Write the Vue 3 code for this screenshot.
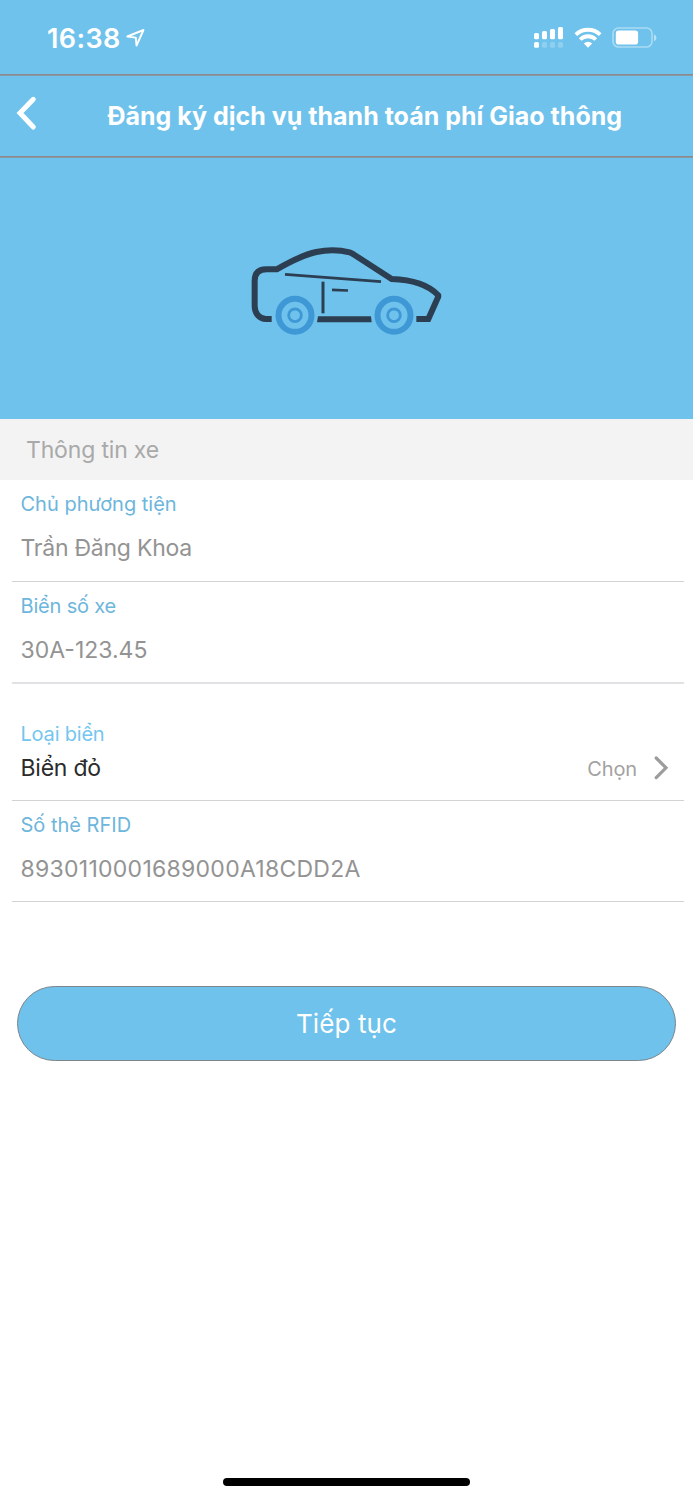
<script setup>
const owner = { label: 'Chủ phương tiện', value: 'Trần Đăng Khoa' }
const plate = { label: 'Biển số xe', value: '30A-123.45' }
const rfid = { label: 'Số thẻ RFID', value: '8930110001689000A18CDD2A' }
</script>

<template>
  <div class="screen">
    <div class="status">
      <span class="time">16:38</span>
      <svg class="loc" width="20" height="20" viewBox="0 0 20 20" fill="none" stroke="#fff" stroke-width="1.9" stroke-linejoin="round">
        <path d="M17.500 2 L1.300 8.500 L9.800 9.600 L10.500 17.500 Z" />
      </svg>
      <svg class="signal" width="30" height="22" viewBox="0 0 30 22" fill="#fff">
        <rect x="0" y="7" width="5" height="6.3" rx="1.5" />
        <rect x="8" y="5" width="5" height="8.3" rx="1.5" />
        <rect x="16" y="3" width="5" height="10.3" rx="1.5" />
        <rect x="24" y="1" width="5" height="12.3" rx="1.5" />
        <rect x="0" y="16" width="5" height="5.7" rx="1.5" />
        <g opacity=".22">
          <rect x="8" y="16" width="5" height="5.7" rx="1.5" />
          <rect x="16" y="16" width="5" height="5.7" rx="1.5" />
          <rect x="24" y="16" width="5" height="5.7" rx="1.5" />
        </g>
      </svg>
      <svg class="wifi" width="28" height="21" viewBox="0 0 28 21" fill="none" stroke="#fff" stroke-width="3.8">
        <path d="M1.8 7.7 A17.5 17.5 0 0 1 26.2 7.7" />
        <path d="M6.2 12.5 A11 11 0 0 1 21.8 12.5" />
        <path d="M9.800 16.500 A6 6 0 0 1 18.200 16.500 L14 20.800 Z" fill="#fff" stroke="none" />
      </svg>
      <svg class="battery" width="45" height="22" viewBox="0 0 45 22">
        <rect x="1" y="1" width="39" height="19" rx="5.5" fill="none" stroke="#fff" stroke-opacity=".42" stroke-width="1.6" />
        <rect x="3.8" y="3.6" width="22.3" height="14" rx="2.8" fill="#fff" />
        <path d="M42 7.3 Q44.5 8.5 44.5 10.7 Q44.5 13 42 14.2 Z" fill="#fff" fill-opacity=".5" />
      </svg>
    </div>

    <div class="navbar">
      <svg class="back" width="24" height="36" viewBox="0 0 24 36" fill="none" stroke="#fff" stroke-width="5" stroke-linecap="round" stroke-linejoin="miter">
        <path d="M19.300 4.300 L6 18 L19.300 32" />
      </svg>
      <h1 class="title">Đăng ký dịch vụ thanh toán phí Giao thông</h1>
    </div>

    <div class="hero">
      <svg width="220" height="120" viewBox="0 0 660 360" fill="none" stroke="#2c3e52">
        <path d="M110 267 H93 C73 267 59 250 59 228 V152 C59 129 72 118 95 118 H125 C167 94 205 74 244 66 C277 59 315 60 344 67 Q351 69 357 74 L470 147 C532 149 578 163 609 195 Q611 198 609 202 L580 267 H544" stroke-width="18" />
        <path d="M249 259 H408 L410 277 H246 Z" fill="#2c3e52" stroke="none" />
        <path d="M150 133 L438 155" stroke-width="8" />
        <path d="M264 155 V250" stroke-width="9" />
        <path d="M291 179.500 L339 181.500" stroke-width="8" />
        <g stroke="#3d98d5">
          <circle cx="180" cy="256" r="49.500" stroke-width="18" />
          <circle cx="180" cy="256" r="19" stroke-width="8.500" />
          <circle cx="477" cy="256" r="49.500" stroke-width="18" />
          <circle cx="477" cy="256" r="19" stroke-width="8.500" />
        </g>
      </svg>
    </div>

    <h2 class="section">Thông tin xe</h2>

    <div class="field">
      <span class="label">{{ owner.label }}</span>
      <span class="value owner">{{ owner.value }}</span>
    </div>
    <div class="field soft">
      <span class="label plate-label">{{ plate.label }}</span>
      <span class="value">{{ plate.value }}</span>
    </div>
    <div class="picker">
      <div class="choice">
        <span class="label type-label">Loại biển</span>
        <span class="value dark">Biển đỏ</span>
      </div>
      <span class="choose">Chọn</span>
      <svg class="chevron" width="18" height="26" viewBox="0 0 18 26" fill="none" stroke="#9c9c9c" stroke-width="3.200" stroke-linecap="round">
        <path d="M4.200 3 L14 12.800 L4.200 22.600" />
      </svg>
    </div>
    <div class="field last">
      <span class="label">{{ rfid.label }}</span>
      <span class="value rfid">{{ rfid.value }}</span>
    </div>

    <button class="next" type="button"><span>Tiếp tục</span></button>
    <div class="home"></div>
  </div>
</template>

<style>
body { background: #fff; }
</style>

<style scoped>
.screen {
  box-sizing: border-box;
  width: 693px;
  height: 1500px;
  display: flex;
  flex-direction: column;
  overflow: hidden;
  background: #fff;
  font-family: Inter, "Liberation Sans", sans-serif;
}
.status {
  box-sizing: border-box;
  height: 76px;
  flex: none;
  display: flex;
  align-items: flex-start;
  background: #6fc2eb;
  border-bottom: 1px solid #8599a8;
  box-shadow: inset 0 -1px #90898b;
  color: #fff;
}
.time {
  width: 79px;
  margin: 22px 0 0 47px;
  font-size: 27px;
  line-height: 33px;
  font-weight: 570;
  letter-spacing: 0.4px;
  white-space: nowrap;
}
.loc { margin-top: 28px; }
.signal { margin: 26px 0 0 388px; }
.wifi { margin: 27px 0 0 10px; }
.battery { margin: 27px 0 0 10px; }
.navbar {
  box-sizing: border-box;
  height: 82px;
  flex: none;
  display: flex;
  align-items: flex-start;
  background: #6fc2eb;
  border-bottom: 1px solid #8599a8;
  box-shadow: inset 0 -1px #90898b;
}
.back { margin: 19px 0 0 14px; }
.title {
  margin: 24px 0 0 69.4px;
  font-size: 25px;
  line-height: 32px;
  font-weight: 680;
  letter-spacing: 0.01px;
  color: #fff;
  white-space: nowrap;
}
.hero {
  box-sizing: border-box;
  height: 261px;
  flex: none;
  padding: 72px 0 0 235px;
  background: #6fc2eb;
}
.hero svg { display: block; }
.section {
  box-sizing: border-box;
  height: 61px;
  flex: none;
  margin: 0;
  padding: 15px 0 0 26px;
  background: #f3f3f3;
  font-size: 23px;
  line-height: 32px;
  font-weight: 400;
  letter-spacing: -0.17px;
  color: #a9a9a9;
}
.field {
  box-sizing: border-box;
  height: 102px;
  flex: none;
  display: flex;
  flex-direction: column;
  margin: 0 9px 0 12px;
  padding: 10px 0 0 8.5px;
  border-bottom: 1px solid #d3d3d6;
}
.soft { border-bottom: 2px solid #e2e2e4; }
.label {
  font-size: 20px;
  line-height: 28px;
  color: #6db6dc;
}
.value {
  margin-top: 14px;
  font-size: 23px;
  line-height: 32px;
  color: #939393;
}
.owner { letter-spacing: -0.24px; }
.plate-label { letter-spacing: -0.18px; }
.rfid { letter-spacing: 0.27px; }
.last { height: 101px; }
.picker {
  box-sizing: border-box;
  height: 117px;
  flex: none;
  display: flex;
  align-items: flex-start;
  margin: 0 9px 0 12px;
  padding: 36px 14px 0 8.5px;
  border-bottom: 1px solid #d3d3d6;
}
.choice {
  flex: 1;
  display: flex;
  flex-direction: column;
}
.type-label {
  color: #74c6f0;
  letter-spacing: -0.2px;
}
.choice .dark {
  margin-top: 4px;
  letter-spacing: -0.22px;
  color: #2b2b2b;
}
.choose {
  margin-top: 35px;
  font-size: 20px;
  line-height: 28px;
  letter-spacing: -0.1px;
  color: #a2a2a2;
}
.chevron { margin: 35px 0 0 15px; }
.next {
  box-sizing: border-box;
  width: 659px;
  height: 75px;
  flex: none;
  margin: 84px 0 0 17px;
  padding: 0;
  border: 1px solid #7c868c;
  border-radius: 37.5px;
  background: #6fc2eb;
  color: #fff;
  font-family: inherit;
  font-size: 26px;
  line-height: 36px;
  letter-spacing: 0.12px;
}
.home {
  width: 247px;
  height: 8px;
  flex: none;
  margin: auto 0 14px 223px;
  border-radius: 4px;
  background: #000;
}
</style>
